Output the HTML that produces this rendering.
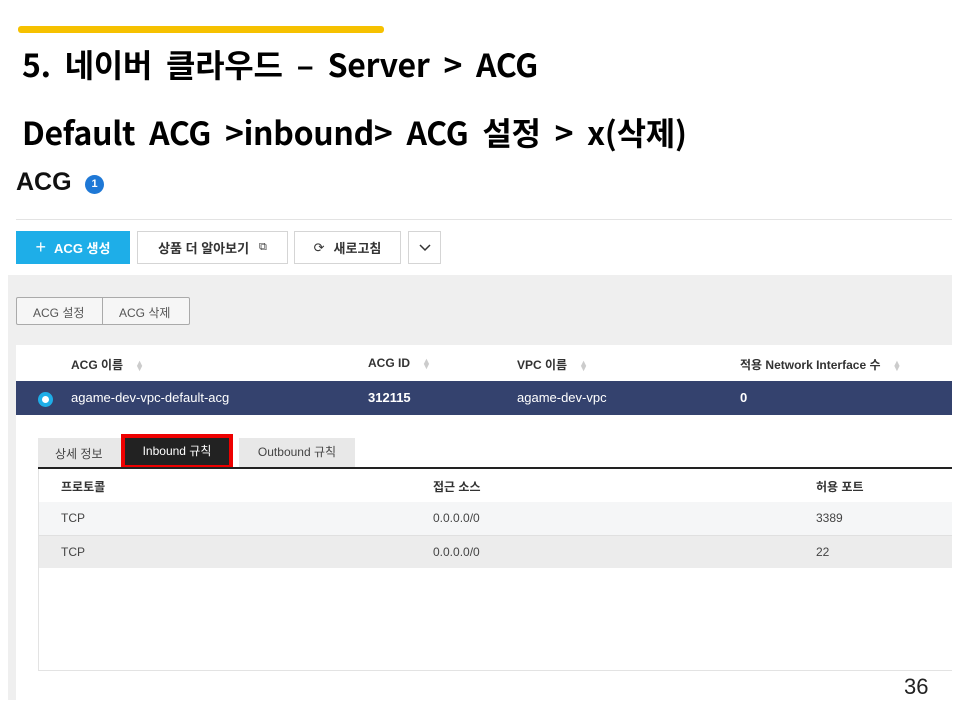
<!DOCTYPE html>
<html><head><meta charset="utf-8"><style>
*{margin:0;padding:0;box-sizing:border-box}
body{width:960px;height:720px;background:#fff;position:relative;overflow:hidden;font-family:"Liberation Sans","Noto Sans CJK KR",sans-serif;color:#222}
.a{position:absolute;white-space:nowrap}
.t{font-family:"Noto Sans CJK KR","Liberation Sans",sans-serif;font-weight:700;font-size:32px;color:#000;letter-spacing:-0.3px;word-spacing:7px;line-height:44px}
.btn{position:absolute;border:1px solid #d5d5d5;background:#fff;font-size:13px;font-weight:700;display:flex;align-items:center;justify-content:center;color:#333}
.h{font-size:12px;font-weight:700;color:#333}
.sort{display:inline-block;margin-left:12px;color:#ccc;font-size:9px;vertical-align:middle;line-height:5px}
.c{font-size:12px;color:#444}
</style></head><body>
<div class="a" style="left:18px;top:26px;width:366px;height:7px;background:#f6c100;border-radius:3px"></div>
<div class="a t" style="left:22px;top:42px">5. 네이버 클라우드 – Server &gt; ACG</div>
<div class="a t" style="left:22px;top:110px">Default ACG &gt;inbound&gt; ACG 설정 &gt; x(삭제)</div>

<div class="a" style="left:16px;top:168px;font-size:25px;font-weight:700;color:#111">ACG</div>
<div class="a" style="left:85px;top:175px;width:19px;height:19px;border-radius:50%;background:#1e78d6;color:#fff;font-size:11px;font-weight:700;text-align:center;line-height:19px">1</div>
<div class="a" style="left:16px;top:219px;width:936px;height:1px;background:#e3e3e3"></div>

<div class="btn" style="left:16px;top:231px;width:114px;height:33px;background:#1eaee8;border-color:#1eaee8;color:#fff"><span style="font-size:18px;font-weight:400;margin-right:8px">+</span>ACG 생성</div>
<div class="btn" style="left:137px;top:231px;width:151px;height:33px">상품 더 알아보기 <span style="margin-left:10px;font-weight:400;font-size:11px">⧉</span></div>
<div class="btn" style="left:294px;top:231px;width:107px;height:33px"><span style="margin-right:9px;font-weight:400">⟳</span>새로고침</div>
<div class="btn" style="left:408px;top:231px;width:33px;height:33px;font-weight:400">
<svg width="12" height="8" viewBox="0 0 12 8"><path d="M1 1l5 5 5-5" stroke="#333" stroke-width="1.5" fill="none"/></svg></div>

<div class="a" style="left:8px;top:275px;width:944px;height:70px;background:#efefef"></div>
<div class="a" style="left:8px;top:345px;width:8px;height:355px;background:#efefef"></div>
<div class="a" style="left:16px;top:297px;width:174px;height:28px;border:1px solid #aaa;border-radius:2px;background:#f6f6f6"></div>
<div class="a" style="left:102px;top:298px;width:1px;height:26px;background:#aaa"></div>
<div class="a c" style="left:33px;top:304px;color:#555">ACG 설정</div>
<div class="a c" style="left:119px;top:304px;color:#555">ACG 삭제</div>

<div class="a" style="left:16px;top:381px;width:936px;height:34px;background:#34426e"></div>
<div class="a h" style="left:71px;top:356px">ACG 이름<span class="sort">▲<br>▼</span></div>
<div class="a h" style="left:368px;top:356px">ACG ID<span class="sort">▲<br>▼</span></div>
<div class="a h" style="left:517px;top:356px">VPC 이름<span class="sort">▲<br>▼</span></div>
<div class="a h" style="left:740px;top:356px">적용 Network Interface 수<span class="sort">▲<br>▼</span></div>
<div class="a" style="left:38px;top:392px;width:15px;height:15px;border-radius:50%;background:#1eaee8"></div>
<div class="a" style="left:42px;top:396px;width:7px;height:7px;border-radius:50%;background:#fff"></div>
<div class="a" style="left:71px;top:390px;font-size:13px;color:#fff">agame-dev-vpc-default-acg</div>
<div class="a" style="left:368px;top:390px;font-size:13px;color:#fff;font-weight:700">312115</div>
<div class="a" style="left:517px;top:390px;font-size:13px;color:#fff">agame-dev-vpc</div>
<div class="a" style="left:740px;top:390px;font-size:13px;color:#fff;font-weight:700">0</div>

<div class="a" style="left:38px;top:438px;width:84px;height:29px;background:#e8e8e8"></div>
<div class="a c" style="left:55px;top:445px">상세 정보</div>
<div class="a" style="left:121px;top:434px;width:112px;height:34px;background:#e00;"></div>
<div class="a" style="left:125px;top:438px;width:104px;height:27px;background:#222;color:#fff;font-size:12px;text-align:center;line-height:27px">Inbound 규칙</div>
<div class="a" style="left:239px;top:438px;width:116px;height:29px;background:#e8e8e8;font-size:12px;color:#444;text-align:center;line-height:29px">Outbound 규칙</div>
<div class="a" style="left:38px;top:467px;width:914px;height:2px;background:#222"></div>
<div class="a" style="left:38px;top:469px;width:1px;height:201px;background:#e3e3e3"></div>
<div class="a" style="left:38px;top:670px;width:914px;height:1px;background:#e3e3e3"></div>
<div class="a h" style="left:61px;top:478px">프로토콜</div>
<div class="a h" style="left:433px;top:478px">접근 소스</div>
<div class="a h" style="left:816px;top:478px">허용 포트</div>
<div class="a" style="left:39px;top:502px;width:913px;height:33px;background:#f5f6f7"></div>
<div class="a" style="left:39px;top:535px;width:913px;height:33px;background:#ececec;border-top:1px solid #e0e0e0"></div>
<div class="a c" style="left:61px;top:511px">TCP</div>
<div class="a c" style="left:433px;top:511px">0.0.0.0/0</div>
<div class="a c" style="left:816px;top:511px">3389</div>
<div class="a c" style="left:61px;top:545px">TCP</div>
<div class="a c" style="left:433px;top:545px">0.0.0.0/0</div>
<div class="a c" style="left:816px;top:545px">22</div>

<div class="a" style="left:904px;top:674px;font-size:22px;color:#222">36</div>
</body></html>
